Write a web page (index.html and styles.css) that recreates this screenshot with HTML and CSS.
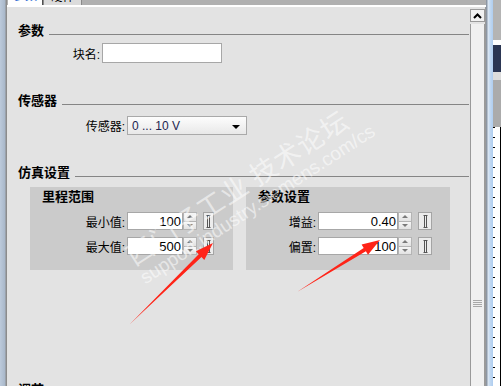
FILE: index.html
```html
<!DOCTYPE html>
<html lang="zh">
<head>
    <meta charset="UTF-8">
    <title>参数</title>
    <link rel="stylesheet" href="styles.css">
</head>
<body>
    <div class="screen">
        <div class="frame-left"></div>

        <div class="pane">
            <div class="tabs">
                <div class="tab active">参数</div>
                <div class="tab">硬件</div>
            </div>

            <div class="pane-body">
                <div class="content">
                    <div class="heading"><span>参数</span><i class="rule"></i></div>
                    <div class="row row-name">
                        <label class="lbl" for="blockName">块名:</label>
                        <input type="text" id="blockName" class="field name-field">
                    </div>

                    <div class="heading h-gap"><span>传感器</span><i class="rule"></i></div>
                    <div class="row row-sensor">
                        <label class="lbl">传感器:</label>
                        <div class="combo"><span>0 ... 10 V</span><i class="combo-arrow"></i></div>
                    </div>

                    <div class="heading h-gap"><span>仿真设置</span><i class="rule"></i></div>
                    <div class="groups">
                        <div class="group range">
                            <div class="group-title">里程范围</div>
                            <div class="row">
                                <label class="lbl">最小值:</label>
                                <input type="text" class="field num" value="100">
                                <div class="spin"><b class="up"></b><b class="down"></b></div>
                                <div class="slide-btn"><svg width="9" height="15" viewBox="0 0 9 15"><path d="M2.5 1.5h4M2.5 13.5h4M3.5 1.5v12h2v-12" fill="none" stroke="#555" stroke-width="1"/></svg></div>
                            </div>
                            <div class="row">
                                <label class="lbl">最大值:</label>
                                <input type="text" class="field num" value="500">
                                <div class="spin"><b class="up"></b><b class="down"></b></div>
                                <div class="slide-btn"><svg width="9" height="15" viewBox="0 0 9 15"><path d="M2.5 1.5h4M2.5 13.5h4M3.5 1.5v12h2v-12" fill="none" stroke="#555" stroke-width="1"/></svg></div>
                            </div>
                        </div>

                        <div class="group params">
                            <div class="group-title">参数设置</div>
                            <div class="row">
                                <label class="lbl">增益:</label>
                                <input type="text" class="field num" value="0.40">
                                <div class="spin"><b class="up"></b><b class="down"></b></div>
                                <div class="slide-btn"><svg width="9" height="15" viewBox="0 0 9 15"><path d="M2.5 1.5h4M2.5 13.5h4M3.5 1.5v12h2v-12" fill="none" stroke="#555" stroke-width="1"/></svg></div>
                            </div>
                            <div class="row">
                                <label class="lbl">偏置:</label>
                                <input type="text" class="field num" value="100">
                                <div class="spin"><b class="up"></b><b class="down"></b></div>
                                <div class="slide-btn"><svg width="9" height="15" viewBox="0 0 9 15"><path d="M2.5 1.5h4M2.5 13.5h4M3.5 1.5v12h2v-12" fill="none" stroke="#555" stroke-width="1"/></svg></div>
                            </div>
                        </div>
                    </div>

                    <div class="heading h-last"><span>调节</span><i class="rule"></i></div>
                </div>

                <div class="scrollbar">
                    <div class="scroll-up">
                        <svg width="9" height="6" viewBox="0 0 9 6"><polyline points="1,5 4.5,1.5 8,5" fill="none" stroke="#000" stroke-width="2"/></svg>
                    </div>
                    <div class="scroll-thumb"><span class="grip"></span></div>
                </div>
            </div>
        </div>

        <div class="frame-right"></div>

        <div class="other">
            <div class="o1"></div>
            <div class="o2"></div>
            <div class="o3"></div>
            <div class="o4"></div>
            <div class="o5"></div>
            <div class="o6"></div>
        </div>
    </div>

    <!-- watermark and markers drawn over the screenshot -->
    <div class="watermark">
        <div class="wm-cn">西门子工业 技术论坛</div>
        <div class="wm-en">support.industry.siemens.com/cs</div>
    </div>

    <svg class="arrows" width="501" height="386" viewBox="0 0 501 386">
        <polygon points="130,324 201.5,257 204.3,259.9 213,243 195.9,251.3 198.7,254.2" fill="#ff2418"/>
        <polygon points="297,292 365.9,251.3 368,254.7 380,240 361.6,244.5 363.7,247.9" fill="#ff2418"/>
    </svg>
</body>
</html>
```

FILE: styles.css
```css
* {
    box-sizing: border-box;
}
body {
    margin: 0;
    width: 501px;
    height: 386px;
    overflow: hidden;
    position: relative;
    font-family: "Liberation Sans", "Noto Sans CJK SC", sans-serif;
    font-size: 12px;
    color: #000;
    background: #b0b0b0;
}
.screen {
    display: flex;
    height: 386px;
}
.frame-left {
    width: 7px;
    background: linear-gradient(to right, #bccadb 0, #a9b8ca 5px, #8c8c8c 6px, #8c8c8c 7px);
}
.pane {
    width: 479px;
    display: flex;
    flex-direction: column;
}

/* tab strip, only the bottom of it is visible */
.tabs {
    height: 7px;
    display: flex;
    align-items: flex-end;
    overflow: hidden;
    padding-left: 1px;
    background: #b0b0b0;
    border-bottom: 2px solid #fff;
}
.tab {
    height: 18px;
    line-height: 18px;
    text-align: center;
    flex-shrink: 0;
}
.tab.active {
    width: 35px;
    background: #fff;
    color: #2060d0;
    border-right: 1px solid #505050;
}
.tab:not(.active) {
    width: 39px;
    background: #dcdcdc;
    border: 1px solid #8a8a8a;
    border-bottom: none;
}

.pane-body {
    flex: 1;
    min-height: 0;
    display: flex;
    background: #e3e3e3;
}
.content {
    flex: 1;
    padding: 16px 0 0 11px;
    overflow: hidden;
}

.heading {
    display: flex;
    align-items: center;
    height: 16px;
    line-height: 16px;
    font-size: 13px;
    font-weight: bold;
}
.rule {
    flex: 1;
    height: 1px;
    background: #858585;
    margin: 6px 0 0 5px;
}
.h-gap {
    margin-top: 30px;
}
.h-last {
    margin-top: 112px;
}

.row {
    display: flex;
    align-items: center;
}
.lbl {
    text-align: right;
    flex-shrink: 0;
}
.field {
    margin: 0 0 0 2px;
    border: 1px solid #a7a7a7;
    background: #fff;
    font-family: "Liberation Sans", sans-serif;
    font-size: 13px;
    color: #000;
    outline: none;
}
.row-name {
    margin-top: 4px;
    padding-left: 44px;
}
.row-name .lbl {
    width: 38px;
}
.name-field {
    width: 120px;
    height: 20px;
    padding: 0 2px;
}
.row-sensor {
    margin-top: 7px;
    padding-left: 44px;
}
.row-sensor .lbl {
    width: 63px;
}
.combo {
    margin-left: 2px;
    width: 120px;
    height: 19px;
    display: flex;
    align-items: center;
    justify-content: space-between;
    padding: 0 6px 0 4px;
    border: 1px solid #a9a9a9;
    background: linear-gradient(#fdfdfd, #e8e8e8);
    color: #1d2550;
}
.combo-arrow {
    width: 0;
    height: 0;
    margin-top: 3px;
    border-left: 4px solid transparent;
    border-right: 4px solid transparent;
    border-top: 4px solid #000;
}

.groups {
    display: flex;
    gap: 13px;
    margin: 6px 0 0 12px;
}
.group {
    height: 83px;
    padding: 2px 0 0 12px;
    background: #cbcbcb;
}
.group.range {
    width: 203px;
}
.group.params {
    width: 204px;
}
.group-title {
    height: 16px;
    line-height: 16px;
    font-size: 13px;
    font-weight: bold;
}
.group .row {
    margin-top: 7px;
    height: 18px;
}
.range .row {
    padding-left: 38px;
}
.range .lbl {
    width: 45px;
}
.range .num {
    width: 56px;
}
.params .row {
    padding-left: 22px;
}
.params .lbl {
    width: 36px;
}
.params .num {
    width: 80px;
}
.num {
    height: 18px;
    padding: 0 1px 0 0;
    text-align: right;
}

.spin {
    width: 14px;
    height: 18px;
    display: flex;
    flex-direction: column;
}
.spin b {
    flex: 1;
    display: flex;
    align-items: center;
    justify-content: center;
    border: 1px solid #b4b4b4;
    background: linear-gradient(#f6f6f6, #e2e2e2);
}
.spin .down {
    border-top: none;
}
.spin b::after {
    content: "";
    width: 0;
    height: 0;
    border-left: 3px solid transparent;
    border-right: 3px solid transparent;
}
.spin .up::after {
    border-bottom: 3px solid #7a7a7a;
}
.spin .down::after {
    border-top: 3px solid #7a7a7a;
}
.slide-btn {
    margin-left: 6px;
    height: 18px;
    display: flex;
    align-items: center;
    justify-content: center;
    border: 1px solid #a4a4a4;
    background: #ececec;
}
.range .slide-btn {
    width: 11px;
}
.params .slide-btn {
    width: 14px;
}

.scrollbar {
    width: 16px;
    margin-left: 1px;
    display: flex;
    flex-direction: column;
    overflow: hidden;
    border-right: 1px solid #9a9a9a;
}
.scroll-up {
    width: 15px;
    height: 13px;
    margin-top: 2px;
    display: flex;
    align-items: center;
    justify-content: center;
    border: 1px solid #9a9a9a;
    background: #f2f2f2;
}
.scroll-thumb {
    width: 15px;
    flex: 1;
    margin-top: 2px;
    padding-top: 276px;
    border-left: 1px solid #9a9a9a;
    border-right: 1px solid #9a9a9a;
    background: #f0f0f0;
    display: flex;
    justify-content: center;
}
.grip {
    width: 9px;
    height: 7px;
    background: repeating-linear-gradient(#a9a9a9 0 1px, transparent 1px 2px);
}

.frame-right {
    width: 7px;
    background: linear-gradient(to right, #8d97a4 0, #8d97a4 1px, #dde8f3 2px, #c3d9f1 4px, #aecdf0 7px);
}
.other {
    width: 8px;
    display: flex;
    flex-direction: column;
}
.o1 { height: 40px; background: #b4b4b4; }
.o2 { height: 5px; background: #fff; }
.o3 { height: 27px; background: #2b3653; }
.o4 { height: 8px; background: #dcdcdc; }
.o5 { height: 47px; background: #ababab; }
.o6 {
    flex: 1;
    background-color: #fff;
    background-image: repeating-linear-gradient(#000 0 1px, transparent 1px 10px);
    background-size: 2px 100%;
    background-repeat: no-repeat;
    border-right: 1px solid #000;
}

.watermark {
    position: absolute;
    left: 120px;
    top: 245px;
    transform-origin: 0 0;
    transform: rotate(-33deg);
    white-space: nowrap;
    pointer-events: none;
    color: rgba(255, 255, 255, 0.55);
}
.wm-cn {
    font-family: "Noto Sans CJK SC", sans-serif;
    font-size: 27px;
    line-height: 30px;
    letter-spacing: 1px;
}
.wm-en {
    font-family: "Liberation Sans", sans-serif;
    font-size: 19px;
    line-height: 22px;
}
.arrows {
    position: absolute;
    left: 0;
    top: 0;
}
```
